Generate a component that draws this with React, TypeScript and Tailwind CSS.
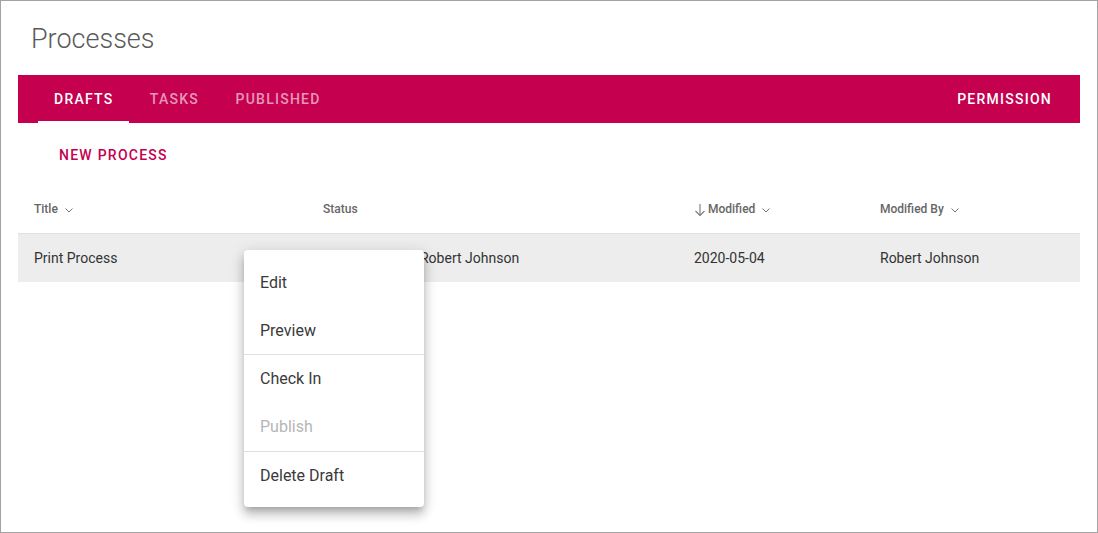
import React from "react";

const Chevron = () => (
  <svg width="10" height="10" viewBox="0 0 10 10" className="ml-[6px] mt-[2px]" fill="none" stroke="#777" strokeWidth="1">
    <path d="M1.5 3.5 L5 7 L8.5 3.5" />
  </svg>
);

const ArrowDown = () => (
  <svg width="12" height="14" viewBox="0 0 12 14" className="mr-[2px] mt-[1px]" fill="none" stroke="#777" strokeWidth="1.1">
    <path d="M6 1 V12.5" />
    <path d="M1.5 8 L6 12.5 L10.5 8" />
  </svg>
);

export default function App() {
  return (
    <div
      className="w-[1098px] h-[533px] border border-[#a3a3a3] bg-white relative overflow-hidden"
      style={{ fontFamily: "Roboto, 'Noto Sans', sans-serif" }}
    >
      <div className="pl-[30px] pt-[20px] h-[74px]">
        <h1 className="text-[27px] font-light text-[#5a5a5a] leading-[36px]">Processes</h1>
      </div>
      <div className="mx-[17px] h-[48px] bg-[#c4004f] flex items-stretch justify-between">
        <div className="flex pl-[20px]">
          <div className="relative min-w-[90px] px-4 flex items-center justify-center text-[14px] font-medium tracking-[1.25px] text-white">
            DRAFTS
            <div className="absolute left-0 right-0 bottom-0 h-[2px] bg-white" />
          </div>
          <div className="min-w-[90px] px-4 flex items-center justify-center text-[14px] font-medium tracking-[1.25px] text-white/60">
            TASKS
          </div>
          <div className="min-w-[90px] px-4 flex items-center justify-center text-[14px] font-medium tracking-[1.25px] text-white/60">
            PUBLISHED
          </div>
        </div>
        <div className="flex items-center pr-[28px] text-[14px] font-medium tracking-[1.25px] text-white">
          PERMISSION
        </div>
      </div>
      <div className="pl-[42px] pt-[14px] h-[62px]">
        <div className="px-4 h-[36px] flex items-center text-[14px] font-medium tracking-[1.25px] text-[#c4004f] w-fit">
          NEW PROCESS
        </div>
      </div>
      <div className="mx-[17px]">
        <div className="h-[49px] flex items-center border-b border-[#e0e0e0] text-[12px] font-medium text-[#666]">
          <div className="w-[288px] pl-4 flex items-center">Title<Chevron /></div>
          <div className="w-[388px] pl-[17px] flex items-center">Status</div>
          <div className="w-[186px] flex items-center"><ArrowDown />Modified<Chevron /></div>
          <div className="flex-1 flex items-center">Modified By<Chevron /></div>
        </div>
        <div className="h-[48px] flex items-center bg-[#ededed] text-[14px] text-[#333]">
          <div className="w-[288px] pl-4">Print Process</div>
          <div className="w-[388px] pl-[17px]">Checked out to Robert Johnson</div>
          <div className="w-[186px]">2020-05-04</div>
          <div className="flex-1">Robert Johnson</div>
        </div>
      </div>
      <div className="absolute left-[243px] top-[249px] w-[180px] bg-white rounded-[4px] pt-[9px] pb-[7px] shadow-[0_5px_6px_-3px_rgba(0,0,0,0.2),0_8px_10px_1px_rgba(0,0,0,0.14),0_3px_14px_2px_rgba(0,0,0,0.12)] text-[16px]">
        <div className="h-[48px] px-4 flex items-center text-[#3a3a3a]">Edit</div>
        <div className="h-[47px] px-4 flex items-center text-[#3a3a3a]">Preview</div>
        <div className="h-px bg-[#e0e0e0]" />
        <div className="h-[48px] px-4 flex items-center text-[#3a3a3a]">Check In</div>
        <div className="h-[48px] px-4 flex items-center text-[#b5b5b5]">Publish</div>
        <div className="h-px bg-[#e0e0e0]" />
        <div className="h-[48px] px-4 flex items-center text-[#3a3a3a]">Delete Draft</div>
      </div>
    </div>
  );
}
